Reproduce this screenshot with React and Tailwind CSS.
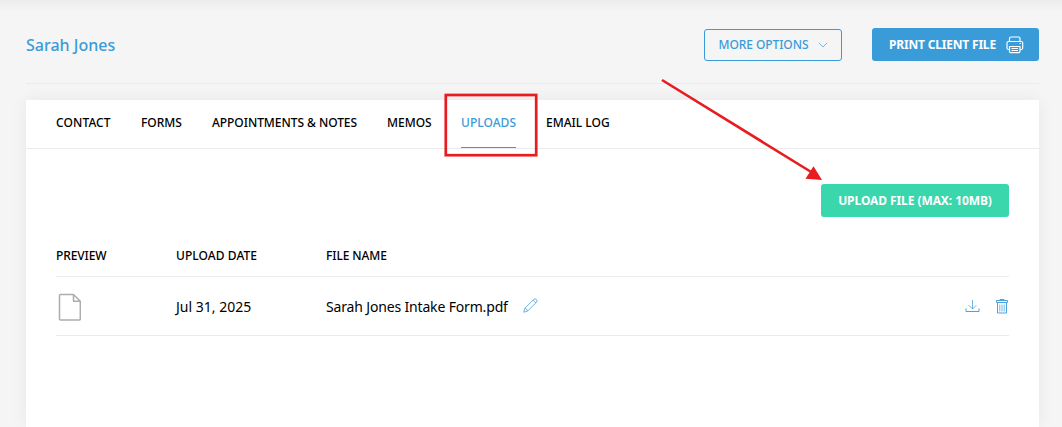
import React from "react";

const tabs = [
  { label: "CONTACT", width: "w-[55px] tracking-[0.1px]" },
  { label: "FORMS", width: "w-[41px]" },
  { label: "APPOINTMENTS & NOTES", width: "w-[145px] tracking-[-0.05px]" },
  { label: "MEMOS", width: "w-[44px]" },
  { label: "UPLOADS", width: "w-[55px] tracking-[0.05px]", active: true },
  { label: "EMAIL LOG", width: "w-[63px]" },
];

function ChevronIcon() {
  return (
    <svg className="h-[6px] w-[10px]" viewBox="0 0 10 6" fill="none" stroke="#3a9bd9" strokeOpacity="0.7">
      <path d="M0.8 0.8 5 5 9.2 0.8" />
    </svg>
  );
}

function PrinterIcon() {
  return (
    <svg className="h-[18px] w-[18px]" viewBox="0 0 18 18" fill="none" stroke="white" strokeWidth="1.200" strokeLinejoin="round">
      <path d="M3.500 5.500V2.500Q3.500 1 5 1H12.500Q14 1 14 2.500V5.500" />
      <path d="M3.500 13.500H2.500Q1 13.500 1 12V7Q1 5.500 2.500 5.500H15.200Q16.700 5.500 16.700 7V12Q16.700 13.500 15.200 13.500H14" />
      <path d="M3.500 10.500H14V15.500Q14 16.700 13 16.700H4.500Q3.500 16.700 3.500 15.500ZM5.500 12.500H12M5.500 14.500H12M13.500 7.500H15" />
    </svg>
  );
}

function FileIcon() {
  return (
    <svg className="h-[28px] w-[24px]" viewBox="0 0 24 28" fill="none" stroke="#adadad" strokeWidth="1.500" strokeLinejoin="round">
      <path d="M3.500 1.500H16.500L23.300 8.300V26Q23.300 27 22.300 27H3.500Q2.500 27 2.500 26V2.500Q2.500 1.500 3.500 1.500ZM16.500 1.500V8.300H23.300" />
    </svg>
  );
}

function PencilIcon() {
  return (
    <svg className="h-[15px] w-[15px]" viewBox="0 0 15 15" fill="none" stroke="#5caade" strokeWidth="0.9" strokeLinejoin="round">
      <path d="M.7 14.200 1.800 10.300 10.700 1.400Q12 .2 13.200 1.300L13.600 1.700Q14.700 2.900 13.500 4.200L4.600 13.100ZM1.800 10.300Q4 10.600 4.600 13.100M10 2.100 12.900 5" />
    </svg>
  );
}

function DownloadIcon() {
  return (
    <svg className="h-[14px] w-[15px]" viewBox="0 0 15 14" fill="none" stroke="#4aa3dc" strokeWidth="1">
      <path d="M7.500 1V10M3.700 6.200 7.500 10 11.300 6.200" strokeOpacity="0.8" />
      <path d="M1 9.500V12.500H14V9.500" />
    </svg>
  );
}

function TrashIcon() {
  return (
    <svg className="h-[15px] w-[12px]" viewBox="0 0 12 15" fill="none" stroke="#4aa3dc">
      <path d="M4 1.500V.5H8V1.500M.5 1.500H11.500V3.500H.5ZM1.500 3.500V14H10.500V3.500" />
      <path d="M3.800 5.500V12.500M6 5.500V12.500M8.200 5.500V12.500" strokeWidth="0.8" />
    </svg>
  );
}

export default function App() {
  return (
    <div className="relative h-[427px] w-[1062px] overflow-hidden bg-[#f5f5f5] font-['Noto_Sans','Open_Sans',sans-serif] whitespace-nowrap text-black">
      <div className="flex h-full flex-col bg-[linear-gradient(#ebebeb,#f5f5f5_11px)] pr-[23px] pl-[26px]">
        <header className="flex h-[84px] shrink-0 items-center justify-between border-b border-[#ebebeb] pt-[6px]">
          <h1 className="text-base font-medium text-[#3a9bd9]">Sarah Jones</h1>
          <div className="flex items-center gap-[30px]">
            <button className="flex h-8 w-[138px] items-center gap-[9px] rounded-[3px] border border-[#3a9bd9] pl-[13.500px] text-xs font-medium tracking-[-0.08px] text-[#3a9bd9]">
              <span className="w-[90px]">MORE OPTIONS</span>
              <ChevronIcon />
            </button>
            <button className="flex h-[33px] w-[167px] items-center gap-[9.500px] rounded-[3px] bg-[#3a9bd9] pl-[17px] text-xs font-bold tracking-[-0.19px] text-white">
              <span className="w-[107px]">PRINT CLIENT FILE</span>
              <PrinterIcon />
            </button>
          </div>
        </header>
        <main className="mt-4 flex-1 bg-white shadow-[0_0_16px_rgba(0,0,0,0.06)]">
          <nav className="flex h-[49px] gap-[30px] border-b border-[#ebebeb] px-[30px] text-xs font-medium">
            {tabs.map((tab) => (
              <a
                key={tab.label}
                className={`${tab.width} h-[48px] pt-[15px] ${tab.active ? "border-b border-[#3a9bd9] text-[#3a9bd9]" : ""}`}
              >
                {tab.label}
              </a>
            ))}
          </nav>
          <section className="px-[30px] pt-[35px]">
            <div className="flex justify-end">
              <button className="h-[33px] w-[188px] rounded-[3px] bg-[#3ad6ac] text-xs font-bold tracking-[-0.08px] text-white">
                UPLOAD FILE (MAX: 10MB)
              </button>
            </div>
            <div className="mt-[18px] grid h-[42px] grid-cols-[120px_150px_1fr] items-center border-b border-[#ebebeb] text-xs font-medium">
              <span className="tracking-[-0.1px]">PREVIEW</span>
              <span className="tracking-[0.08px]">UPLOAD DATE</span>
              <span className="tracking-[-0.1px]">FILE NAME</span>
            </div>
            <div className="grid h-[59px] grid-cols-[120px_150px_1fr_auto] items-center border-b border-[#ebebeb] text-sm">
              <div className="pt-[1px] pl-[1px]"><FileIcon /></div>
              <span className="pt-[2px]">Jul 31, 2025</span>
              <div className="flex items-center gap-[14px]">
                <span className="w-[183px] pt-[2px] tracking-[-0.16px]">Sarah Jones Intake Form.pdf</span>
                <div className="pb-[2px]"><PencilIcon /></div>
              </div>
              <div className="flex items-center gap-4 pr-[1px]">
                <DownloadIcon />
                <TrashIcon />
              </div>
            </div>
          </section>
        </main>
      </div>
      <svg className="pointer-events-none absolute inset-0 h-full w-full" viewBox="0 0 1062 427" fill="none">
        <rect x="445.800" y="95" width="90.400" height="60.200" stroke="#e81b1e" strokeWidth="2.700" />
        <path d="M662 80 812 172.500" stroke="#e81b1e" strokeWidth="2.600" />
        <path d="M822 180 813.500 166.200 805.500 178.700Z" fill="#e81b1e" />
      </svg>
    </div>
  );
}
